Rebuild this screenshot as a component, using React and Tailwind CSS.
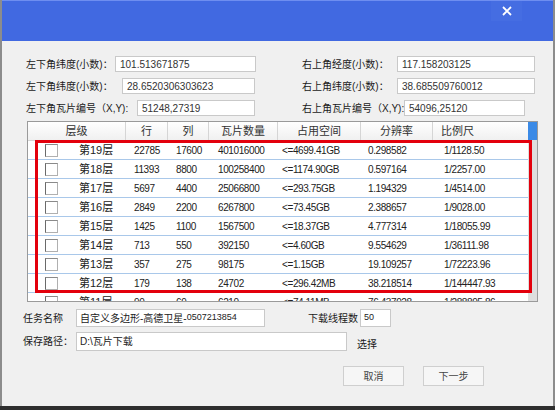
import React from "react";

const font = { fontFamily: '"Liberation Sans","Noto Sans CJK SC",sans-serif' };

const rows = [
    ["第19层", "22785", "17600", "401016000", "<=4699.41GB", "0.298582", "1/1128.50"],
    ["第18层", "11393", "8800", "100258400", "<=1174.90GB", "0.597164", "1/2257.00"],
    ["第17层", "5697", "4400", "25066800", "<=293.75GB", "1.194329", "1/4514.00"],
    ["第16层", "2849", "2200", "6267800", "<=73.45GB", "2.388657", "1/9028.00"],
    ["第15层", "1425", "1100", "1567500", "<=18.37GB", "4.777314", "1/18055.99"],
    ["第14层", "713", "550", "392150", "<=4.60GB", "9.554629", "1/36111.98"],
    ["第13层", "357", "275", "98175", "<=1.15GB", "19.109257", "1/72223.96"],
    ["第12层", "179", "138", "24702", "<=296.42MB", "38.218514", "1/144447.93"],
    ["第11层", "90", "69", "6210", "<=74.11MB", "76.437028", "1/288895.86"],
];

const Field = ({ label, labelW, inputW, value }) => (
    <div className="flex items-center h-[16px]">
        <div className={`${labelW} text-[10px] text-[#1a1a1a] whitespace-nowrap`}>{label}</div>
        <div className={`${inputW} h-[16px] bg-white border border-[#c9c9c9] flex items-end pl-[4px] pb-[1px] text-[10px] text-[#333] leading-none`}>
            {value}
        </div>
    </div>
);

const App = () => {
    return (
        <div style={font} className="w-[555px] h-[410px] bg-[#2e2e2e] overflow-hidden">
            <div className="h-[406px] flex flex-col bg-[#f0f0f0] border-l-2 border-r-2 border-[#8c8c8c]">
                {/* 标题栏 */}
                <div className="h-[41px] bg-[#4169e1] border-t border-[#6e8ef0] flex justify-end pr-[31px]">
                    <div className="w-[31px] h-[20px] bg-[#456de2] flex items-center justify-center">
                        <svg width="10" height="10" viewBox="0 0 10 10">
                            <path d="M1 1 L9 9 M9 1 L1 9" stroke="white" strokeWidth="1.8" />
                        </svg>
                    </div>
                </div>

                {/* 坐标 */}
                <div className="flex mt-[15px] pl-[24px]">
                    <div className="w-[276px] flex flex-col gap-[6px]">
                        <Field label="左下角纬度(小数)：" labelW="w-[89px]" inputW="w-[141px]" value="101.513671875" />
                        <Field label="左下角纬度(小数)：" labelW="w-[96px]" inputW="w-[133px]" value="28.6520306303623" />
                        <Field label="左下角瓦片编号（X,Y):" labelW="w-[111px]" inputW="w-[118px]" value="51248,27319" />
                    </div>
                    <div className="flex flex-col gap-[6px]">
                        <Field label="右上角经度(小数)：" labelW="w-[95px]" inputW="w-[138px]" value="117.158203125" />
                        <Field label="右上角纬度(小数)：" labelW="w-[95px]" inputW="w-[138px]" value="38.685509760012" />
                        <Field label="右上角瓦片编号（X,Y):" labelW="w-[102px]" inputW="w-[121px]" value="54096,25120" />
                    </div>
                </div>

                {/* 层级表 */}
                <div className="relative ml-[25px] mt-[5px] w-[511px] h-[181px] border border-[#9a9a9a] bg-white flex overflow-hidden">
                    <div className="w-[500px] flex flex-col">
                        <div className="h-[19px] shrink-0 flex text-[11px] text-[#333] bg-gradient-to-b from-white to-[#f0f0f0] border-b border-[#d5d5d5]">
                            <div className="w-[98px] flex items-center justify-center border-r border-[#d5d5d5]">层级</div>
                            <div className="w-[42px] flex items-center justify-center border-r border-[#d5d5d5]">行</div>
                            <div className="w-[41px] flex items-center justify-center border-r border-[#d5d5d5]">列</div>
                            <div className="w-[69px] flex items-center justify-center border-r border-[#d5d5d5]">瓦片数量</div>
                            <div className="w-[83px] flex items-center justify-center border-r border-[#d5d5d5]">占用空间</div>
                            <div className="w-[72px] flex items-center justify-center border-r border-[#d5d5d5]">分辨率</div>
                            <div className="flex-1 flex items-center pl-[8px]">比例尺</div>
                        </div>
                        {rows.map((r) => (
                            <div key={r[0]} className="h-[19px] shrink-0 flex items-center border-b border-[#a9c8ea] text-[10px] text-[#222] tracking-[-0.4px]">
                                <div className="w-[98px] flex items-center">
                                    <div className="ml-[17px] w-[13px] h-[13px] bg-white border border-[#b0b0b0] border-l-[#6a6a6a] border-t-[#8a8a8a]"></div>
                                    <span className="ml-[21px] text-[11px] tracking-normal">{r[0]}</span>
                                </div>
                                <div className="w-[42px] pl-[8px]">{r[1]}</div>
                                <div className="w-[41px] pl-[8px]">{r[2]}</div>
                                <div className="w-[69px] pl-[9px]">{r[3]}</div>
                                <div className="w-[83px] pl-[4px]">{r[4]}</div>
                                <div className="w-[72px] pl-[7px]">{r[5]}</div>
                                <div className="flex-1 pl-[11px]">{r[6]}</div>
                            </div>
                        ))}
                    </div>
                    <div className="w-[9px] flex flex-col bg-[#dedede]">
                        <div className="h-[18px] bg-[#3b8ae6]"></div>
                    </div>
                    {/* 红框标注 */}
                    <div className="absolute left-[7px] top-[18px] w-[497px] h-[153px] border-[3px] border-[#e3000c]"></div>
                </div>

                {/* 任务 */}
                <div className="flex items-center mt-[7px] pl-[21px] h-[18px]">
                    <div className="w-[53px] text-[10px] text-[#1a1a1a]">任务名称</div>
                    <div className="w-[189px] h-[18px] bg-white border border-[#c9c9c9] flex items-center pl-[3px] text-[10px] text-[#222] whitespace-nowrap">
                        自定义多边形-高德卫星-<span className="text-[9px]">0507213854</span>
                    </div>
                    <div className="ml-[43px] w-[52px] text-[10px] text-[#1a1a1a] whitespace-nowrap">下载线程数</div>
                    <div className="w-[31px] h-[18px] bg-white border border-[#c9c9c9] flex items-center pl-[3px] text-[9px] text-[#222]">50</div>
                </div>
                <div className="flex items-center mt-[5px] pl-[21px] h-[19px]">
                    <div className="w-[53px] text-[10px] text-[#1a1a1a]">保存路径：</div>
                    <div className="w-[271px] h-[19px] bg-white border border-[#c9c9c9] flex items-center pl-[3px] text-[10px] text-[#222]">
                        D:\瓦片下载
                    </div>
                    <div className="ml-[10px] mt-[6px] text-[10px] text-[#1a1a1a]">选择</div>
                </div>
                <div className="flex mt-[15px] pl-[341px] gap-[19px]">
                    <button className="w-[61px] h-[20px] bg-[#f6f6f6] border border-[#cfcfcf] text-[10px] text-[#444]">取消</button>
                    <button className="w-[61px] h-[20px] bg-[#f6f6f6] border border-[#cfcfcf] text-[10px] text-[#444]">下一步</button>
                </div>
            </div>
        </div>
    );
};

export default App;
